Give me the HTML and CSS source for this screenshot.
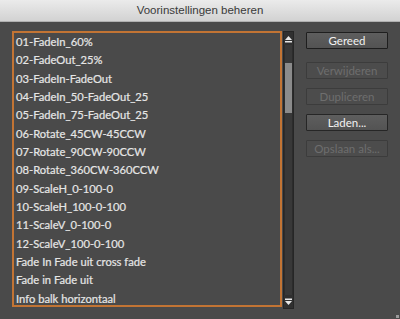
FILE: index.html
```html
<!DOCTYPE html>
<html>
<head>
<meta charset="utf-8">
<link rel="stylesheet" href="styles.css">
</head>
<body>
<div class="window">
  <div class="titlebar">Voorinstellingen beheren</div>
  <div class="content">
    <div class="list">
      <div class="item">01-FadeIn_60%</div>
      <div class="item">02-FadeOut_25%</div>
      <div class="item">03-FadeIn-FadeOut</div>
      <div class="item">04-FadeIn_50-FadeOut_25</div>
      <div class="item">05-FadeIn_75-FadeOut_25</div>
      <div class="item">06-Rotate_45CW-45CCW</div>
      <div class="item">07-Rotate_90CW-90CCW</div>
      <div class="item">08-Rotate_360CW-360CCW</div>
      <div class="item">09-ScaleH_0-100-0</div>
      <div class="item">10-ScaleH_100-0-100</div>
      <div class="item">11-ScaleV_0-100-0</div>
      <div class="item">12-ScaleV_100-0-100</div>
      <div class="item">Fade In Fade uit cross fade</div>
      <div class="item">Fade in Fade uit</div>
      <div class="item">Info balk horizontaal</div>
    </div>
    <div class="scrollbar">
      <div class="arrow up">
        <svg width="9" height="8" viewBox="0 0 9 8"><path d="M4.5 1 L8 5 L1 5 Z" fill="#e8e8e8"/><rect x="1" y="6" width="7" height="1.5" fill="#e8e8e8"/></svg>
      </div>
      <div class="track"><div class="thumb"></div></div>
      <div class="arrow down">
        <svg width="9" height="8" viewBox="0 0 9 8"><rect x="1" y="0.5" width="7" height="1.5" fill="#e8e8e8"/><path d="M1 3 L8 3 L4.5 7 Z" fill="#e8e8e8"/></svg>
      </div>
    </div>
    <div class="buttons">
      <div class="btn primary">Gereed</div>
      <div class="btn disabled first">Verwijderen</div>
      <div class="btn disabled">Dupliceren</div>
      <div class="btn">Laden...</div>
      <div class="btn disabled">Opslaan als...</div>
    </div>
  </div>
  <div class="grip"></div>
</div>
</body>
</html>
```
FILE: styles.css
```css
html, body {
  margin: 0;
  padding: 0;
  width: 400px;
  height: 319px;
  overflow: hidden;
  background: #4a4a4a;
}
.window {
  position: relative;
  width: 400px;
  height: 319px;
  background: #4a4a4a;
  font-family: "Lato", "Liberation Sans", sans-serif;
}
.titlebar {
  height: 21px;
  line-height: 21px;
  text-align: center;
  font-family: "Liberation Sans", sans-serif;
  font-size: 11.5px;
  color: #3a3a3a;
  background: linear-gradient(#ebebeb, #d2d2d2);
  border-bottom: 1px solid #b0b0b0;
}
.content {
  display: flex;
  align-items: flex-start;
  padding: 9px 0 0 12px;
}
.list {
  box-sizing: border-box;
  width: 270px;
  height: 276px;
  border: 2px solid #c27434;
  background: #4a4a4a;
  padding: 0 0 0 2px;
  overflow: hidden;
}
.item {
  height: 18.35px;
  line-height: 18.35px;
  font-size: 11.2px;
  color: #e6e6e6;
  white-space: nowrap;
  -webkit-text-stroke: 0.2px #e6e6e6;
}
.scrollbar {
  box-sizing: border-box;
  width: 11px;
  height: 278px;
  margin-left: 1px;
  background: #2c2c2c;
  border: 1px solid #262626;
  display: flex;
  flex-direction: column;
}
.arrow {
  height: 13px;
  display: flex;
  align-items: center;
  justify-content: center;
  background: #303030;
}
.track {
  flex: 1;
  background: #383838;
  margin: 0 1px;
  padding-top: 18px;
}
.thumb {
  height: 50px;
  background: #8b8b8b;
}
.buttons {
  display: flex;
  flex-direction: column;
  gap: 9px;
  margin-left: 12px;
  margin-top: 1px;
  width: 82px;
}
.btn {
  box-sizing: border-box;
  height: 17px;
  line-height: 15px;
  text-align: center;
  font-size: 11.5px;
  color: #f2f2f2;
  background: linear-gradient(#5e5e5e, #535353);
  border: 1px solid #262626;
  border-radius: 1px;
}
.btn.primary {
  border-color: #1e1e1e;
}
.btn.first {
  margin-top: 4px;
}
.btn.disabled {
  color: #6e6e6e;
  background: #4c4c4c;
  border-color: #3c3c3c;
}
.grip {
  position: absolute;
  right: 1px;
  bottom: 1px;
  width: 3px;
  height: 3px;
  background: #9a9a9a;
}
```
